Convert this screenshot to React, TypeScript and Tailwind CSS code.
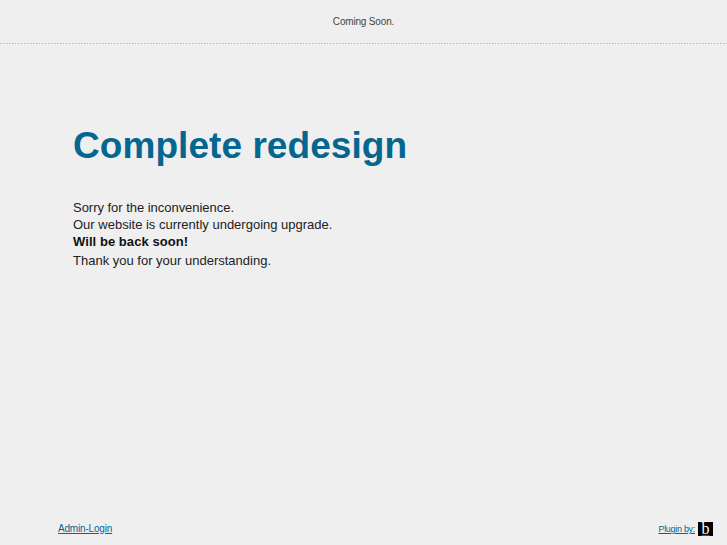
const SANS = "font-['Liberation_Sans',Arial,sans-serif]"

export default function App() {
  return (
    <div className={`flex h-[545px] w-[727px] flex-col overflow-hidden bg-[#efefef] ${SANS}`}>
      <header className="h-[43px] pt-[16px] text-center text-[10px] leading-[12px] tracking-[-0.17px] text-[#444]">
        Coming Soon.
      </header>
      <div className="h-px bg-[repeating-linear-gradient(90deg,#6cc8e0_0,#6cc8e0_1px,#b4e2ee_1px,#b4e2ee_2px,#f2f8fa_2px,#f2f8fa_3px)]" />

      <main className="flex-1 pl-[73px] pt-[80px]">
        <h1 className="text-[37px] font-bold leading-[44px] tracking-[0.06px] text-[#056690]">Complete redesign</h1>
        <div className="mt-[31px] text-[13px] leading-[17px] text-[#222]">
          <p className="tracking-[-0.03px]">Sorry for the inconvenience.</p>
          <p>Our website is currently undergoing upgrade.</p>
          <p className="font-bold tracking-[0.06px] text-[#111]">Will be back soon!</p>
          <p className="mt-[2px]">Thank you for your understanding.</p>
        </div>
      </main>

      <footer className="flex items-center justify-between pb-[9px] pl-[58px] pr-[14px] text-[10px] leading-[14px] text-[#056690]">
        <a href="#" className="tracking-[-0.18px] underline">
          Admin-Login
        </a>
        <a href="#" className="flex items-center gap-[3px] text-[9px] tracking-[-0.3px] underline">
          Plugin by:
          <span className="flex h-[14px] w-[15px] items-center justify-center bg-black font-['Liberation_Serif',serif] text-[16px] leading-[14px] tracking-normal text-white no-underline">
            b
          </span>
        </a>
      </footer>
    </div>
  )
}
